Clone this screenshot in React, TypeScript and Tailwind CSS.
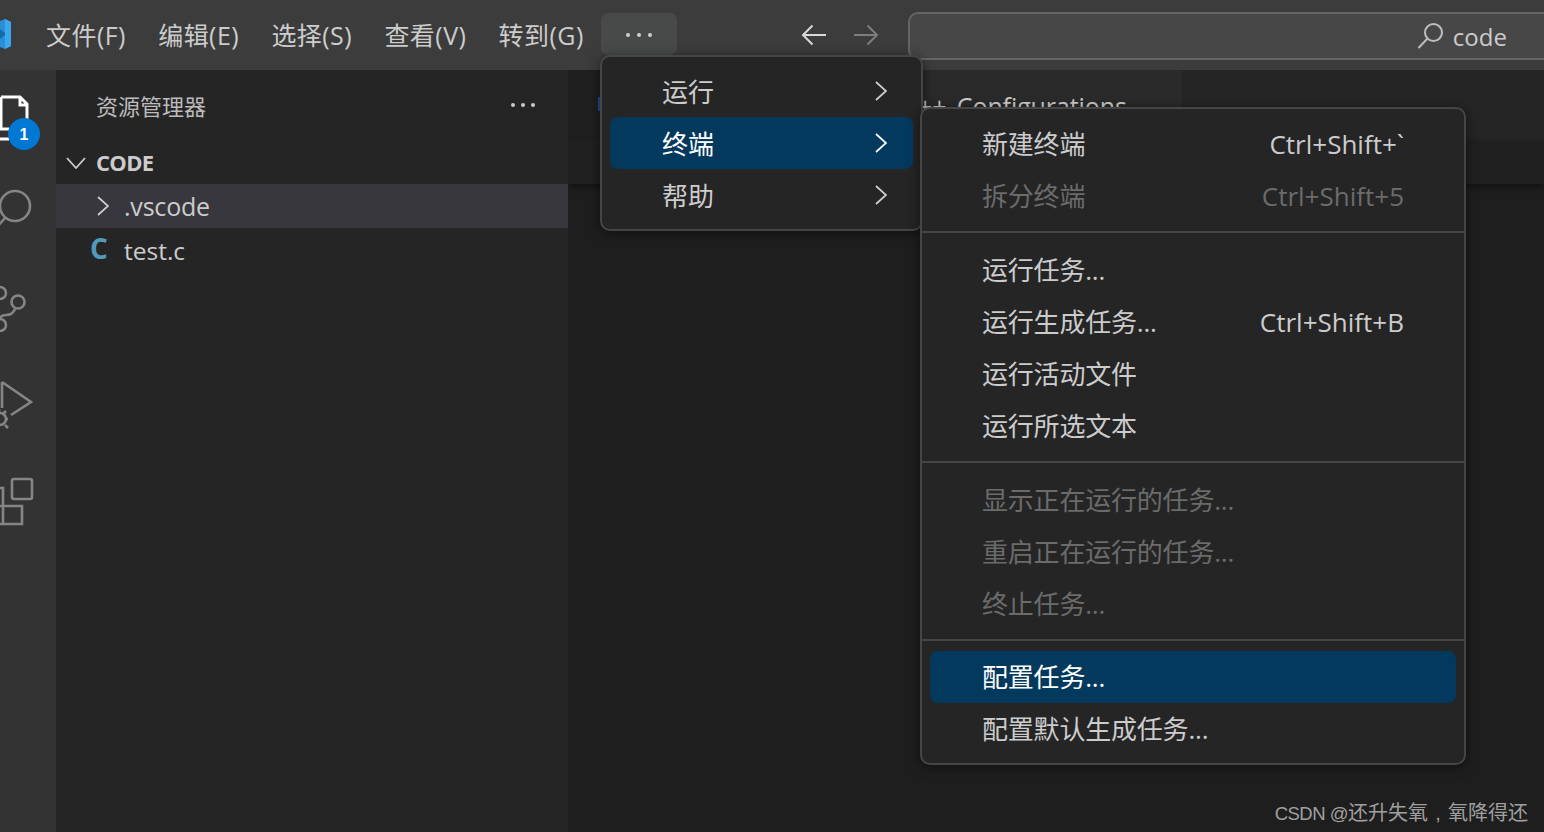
import React from 'react';

const cjk = "font-['Open_Sans','Noto_Sans_CJK_SC',sans-serif]";

type Item = { label: string; keys?: string; disabled?: boolean; active?: boolean };

const groups: Item[][] = [
  [
    { label: '新建终端', keys: 'Ctrl+Shift+`' },
    { label: '拆分终端', keys: 'Ctrl+Shift+5', disabled: true },
  ],
  [
    { label: '运行任务...' },
    { label: '运行生成任务...', keys: 'Ctrl+Shift+B' },
    { label: '运行活动文件' },
    { label: '运行所选文本' },
  ],
  [
    { label: '显示正在运行的任务...', disabled: true },
    { label: '重启正在运行的任务...', disabled: true },
    { label: '终止任务...', disabled: true },
  ],
  [
    { label: '配置任务...', active: true },
    { label: '配置默认生成任务...' },
  ],
];

const menus = ['文件(F)', '编辑(E)', '选择(S)', '查看(V)', '转到(G)'];

const Chevron = () => (
  <svg viewBox="0 0 12 20" className="w-[12px] h-[20px] shrink-0" fill="none" stroke="currentColor" strokeWidth="1.8">
    <path d="M1 1l10 9-10 9" />
  </svg>
);

const TitleBar = () => (
  <div className="h-[70px] shrink-0 bg-[#3c3c3c] flex items-center relative overflow-hidden">
    <svg viewBox="0 0 12 32" className="w-3 h-8 shrink-0 mb-[2px]">
      <path d="M0 3l5 -2 6 3v24l-6 3 -5 -2z" fill="#2a8fd8" />
      <path d="M0 11l5 4 0 2 -5 4z" fill="#156aa8" />
      <path d="M5 1l6 3v24l-6 3z" fill="#3aa7ee" />
    </svg>
    <div className="flex ml-[34px] text-[25px] text-[#cccccc] tracking-[0.45px] gap-[32.3px] pt-[1px]">
      {menus.map((m) => (
        <span key={m} className="whitespace-nowrap">{m}</span>
      ))}
    </div>
    <div className="ml-[17px] w-[76px] h-[42px] pt-[2px] rounded-[7px] bg-[#484a4a] flex items-center justify-center gap-[7px] mb-[2px] shrink-0">
      <i className="w-[4px] h-[4px] rounded-full bg-[#d0d0d0]" />
      <i className="w-[4px] h-[4px] rounded-full bg-[#d0d0d0]" />
      <i className="w-[4px] h-[4px] rounded-full bg-[#d0d0d0]" />
    </div>
    <div className="flex ml-[124px] gap-[26px] shrink-0">
      <svg viewBox="0 0 26 22" className="w-[26px] h-[22px] text-[#d8d8d8]" fill="none" stroke="currentColor" strokeWidth="2">
        <path d="M25 11H2M11.5 1.5L2 11l9.500 9.500" />
      </svg>
      <svg viewBox="0 0 26 22" className="w-[26px] h-[22px] text-[#7d7d7d]" fill="none" stroke="currentColor" strokeWidth="2">
        <path d="M1 11h23M14.500 1.500L24 11l-9.500 9.500" />
      </svg>
    </div>
    <div className="ml-[29px] w-[700px] h-[48px] shrink-0 rounded-[10px] border-[2px] border-[#656565] bg-[#474747] flex items-center pl-[507px] gap-[8px] mt-[1px]">
      <svg viewBox="0 0 28 28" className="w-[28px] h-[28px] shrink-0 text-[#bdbdbd]" fill="none" stroke="currentColor" strokeWidth="2">
        <circle cx="16.500" cy="10.500" r="8.500" />
        <path d="M10.500 16.500L1.500 26" />
      </svg>
      <span className="text-[24px] text-[#cccccc] pt-[2px]">code</span>
    </div>
  </div>
);

const ActivityBar = () => (
  <div className="w-[56px] shrink-0 bg-[#333333] relative overflow-hidden">
    <svg viewBox="0 0 32 48" className="w-[32px] h-[48px] mt-[24px] text-white" fill="none" stroke="currentColor" strokeWidth="3">
      <path d="M1 3H20L27 10V37M20 3V11H27M1 3V35H9M0 45H9" />
    </svg>
    <div className="absolute left-[8px] top-[48px] w-[32px] h-[32px] rounded-full bg-[#0078d4] flex items-center justify-center text-white text-[16px] font-bold pt-[1px] font-['Liberation_Sans',sans-serif]">1</div>
    <svg viewBox="0 0 56 440" className="w-[56px] h-[440px] text-[#858585] mt-[41px]" fill="none" stroke="currentColor" strokeWidth="2.600">
      <circle cx="15" cy="23" r="15" />
      <path d="M5 35L-3 44" />
      <circle cx="0" cy="110" r="6" />
      <circle cx="18" cy="119" r="6.500" />
      <circle cx="0" cy="142" r="6" />
      <path d="M15 126c-2 5 -6 6 -9 6c-4 0 -5 1 -6 3" />
      <path d="M2 199L31 219L11 232M2 199V225" />
      <circle cx="0" cy="236" r="6" />
      <path d="M6 228l-3 3M-1 226v4M8 236h-2M8 245l-3 -3" />
      <rect x="12" y="296" width="20" height="20" rx="2" />
      <path d="M0 305h3v36M0 323h22v18H0" />
    </svg>
  </div>
);

const SideBar = () => (
  <div className="w-[512px] shrink-0 bg-[#252526] text-[#cccccc]">
    <div className="h-[72px] flex items-center justify-between pl-[40px] pr-[33px]">
      <span className="text-[22px] text-[#bbbbbb]">资源管理器</span>
      <div className="flex gap-[6px] mb-[2px]">
        <i className="w-[4px] h-[4px] rounded-full bg-[#cccccc]" />
        <i className="w-[4px] h-[4px] rounded-full bg-[#cccccc]" />
        <i className="w-[4px] h-[4px] rounded-full bg-[#cccccc]" />
      </div>
    </div>
    <div className="h-[42px] flex items-center pl-[10px] gap-[10px]">
      <svg viewBox="0 0 20 12" className="w-[20px] h-[12px] shrink-0" fill="none" stroke="currentColor" strokeWidth="1.800">
        <path d="M1 1l9 10 9-10" />
      </svg>
      <span className="text-[22px] font-bold tracking-[-0.7px] mb-[2px]">CODE</span>
    </div>
    <div className="h-[44px] bg-[#37373d] flex items-center pl-[41px] gap-[15px]">
      <Chevron />
      <span className="text-[25px] tracking-[-0.2px] pt-[2px]">.vscode</span>
    </div>
    <div className="h-[44px] flex items-center pl-[34px] gap-[15px]">
      <span className="w-[19px] text-[#519aba] text-[28px] font-bold leading-none mb-[4px]">C</span>
      <span className="text-[24.500px] pt-[2px]">test.c</span>
    </div>
  </div>
);

const Row = ({ item }: { item: Item }) => (
  <div
    className={`h-[52px] mx-[8px] pl-[52px] pr-[52px] rounded-[8px] flex items-center justify-between text-[26px] tracking-[-0.2px] whitespace-nowrap ${
      item.active ? 'bg-[#04395e] text-white' : item.disabled ? 'text-[#6b6b6b]' : 'text-[#cccccc]'
    }`}
  >
    <span>{item.label}</span>
    {item.keys && <span className="tracking-[0px]">{item.keys}</span>}
  </div>
);

const SubMenu = () => (
  <div className="absolute left-[920px] top-[107px] w-[546px] h-[658px] rounded-[10px] border-[2px] border-[#454545] bg-[#252526] shadow-[0_2px_12px_rgba(0,0,0,0.5)] pt-[9px]">
    {groups.map((g, i) => (
      <div key={i} className={i === 0 ? '' : i === 3 ? 'border-t-[2px] border-[#454545] mt-[9px] pt-[10px]' : 'border-t-[2px] border-[#454545] mt-[9px] pt-[11px]'}>
        {g.map((item) => (
          <Row key={item.label} item={item} />
        ))}
      </div>
    ))}
  </div>
);

const ParentMenu = () => (
  <div className="absolute left-[600px] top-[55px] w-[323px] h-[176px] rounded-[10px] border-[2px] border-[#454545] bg-[#252526] shadow-[0_2px_12px_rgba(0,0,0,0.5)] pt-[8px]">
    {['运行', '终端', '帮助'].map((m) => (
      <div
        key={m}
        className={`h-[52px] mx-[8px] pl-[52px] pr-[26px] rounded-[8px] flex items-center justify-between text-[26px] ${
          m === '终端' ? 'bg-[#04395e] text-white' : 'text-[#cccccc]'
        }`}
      >
        <span className="mt-[2px]">{m}</span>
        <Chevron />
      </div>
    ))}
  </div>
);

const Editor = () => (
  <div className="flex-1 bg-[#1e1e1e] flex flex-col overflow-hidden">
    <div className="h-[70px] bg-[#252526] flex shrink-0">
      <div className="w-[200px] bg-[#1f1f1f] pl-[30px] pt-[27px]">
        <div className="w-[3px] h-[14px] bg-[#1f4e8c]" />
      </div>
      <div className="w-[414px] bg-[#2a2a2a] overflow-hidden pl-[150px] pt-[18px] text-[25px] tracking-[-0.1px] text-[#cccccc] whitespace-nowrap">
        ++ <span className="ml-[4px]">Configurations</span>
      </div>
    </div>
    <div className="h-[44px] bg-[#202020] shadow-[0_3px_6px_rgba(0,0,0,0.4)] shrink-0" />
    <div className="flex-1 flex justify-end items-end pr-[16px] pb-[4px]">
      <span className="text-[20px] text-[#a0a0a0] whitespace-nowrap font-['Liberation_Sans','Noto_Sans_CJK_SC',sans-serif]">
        <span className="text-[18.500px] tracking-[-0.5px]">CSDN @</span>还升失氧<span className="inline-block w-[20px] text-center">,</span>氧降得还
      </span>
    </div>
  </div>
);

export default function App() {
  return (
    <div className={`w-[1544px] h-[832px] flex flex-col overflow-hidden relative bg-[#1e1e1e] ${cjk}`}>
      <TitleBar />
      <div className="flex-1 flex min-h-0">
        <ActivityBar />
        <SideBar />
        <Editor />
      </div>
      <ParentMenu />
      <SubMenu />
    </div>
  );
}
